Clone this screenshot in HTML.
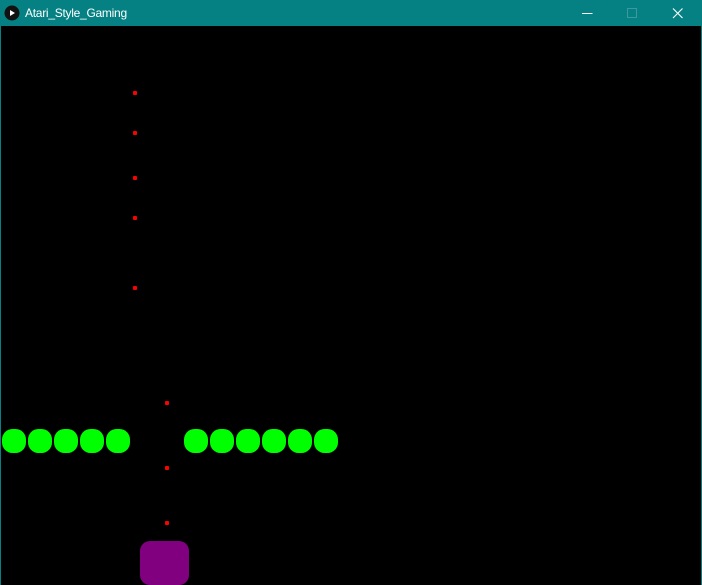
<!DOCTYPE html>
<html>
<head>
<meta charset="utf-8">
<style>
html,body{margin:0;padding:0;width:702px;height:585px;overflow:hidden;background:#000}
#bar{position:absolute;left:0;top:0;width:702px;height:26px;background:#058184}
#title{position:absolute;left:25px;top:5px;font:12px/16px "Liberation Sans",sans-serif;letter-spacing:-.27px;color:#fff;white-space:nowrap}
.edge{position:absolute;top:26px;width:1px;height:559px;background:#058184}
.g{position:absolute;top:429px;width:24px;height:24px;border-radius:10.500px;background:#0f0}
.r{position:absolute;width:4px;height:4px;background:#f00;border-radius:1px}
#p{position:absolute;left:140px;top:541px;width:49px;height:44px;border-radius:10px;background:#800080}
svg{position:absolute;left:0;top:0}
</style>
</head>
<body>
<div id="bar"></div>
<svg width="702" height="26" viewBox="0 0 702 26">
<circle cx="12" cy="13" r="7.500" fill="#111"/>
<path d="M10 10 L15 13 L10 16 Z" fill="#fff"/>
<path d="M582 13.500H592.500" stroke="#fff" stroke-width="1" fill="none"/>
<rect x="627.500" y="8.500" width="9" height="9" stroke="#3a9a9d" stroke-width="1" fill="none"/>
<path d="M673 8.500L682.500 18M682.500 8.500L673 18" stroke="#fff" stroke-width="1.100" fill="none"/>
</svg>
<div id="title">Atari_Style_Gaming</div>
<div class="edge" style="left:0"></div>
<div class="edge" style="left:701px"></div>

<div class="r" style="left:133px;top:91px"></div>
<div class="r" style="left:133px;top:131px"></div>
<div class="r" style="left:133px;top:176px"></div>
<div class="r" style="left:133px;top:216px"></div>
<div class="r" style="left:133px;top:286px"></div>
<div class="r" style="left:165px;top:401px"></div>
<div class="r" style="left:165px;top:466px"></div>
<div class="r" style="left:165px;top:521px"></div>

<div class="g" style="left:2px"></div>
<div class="g" style="left:28px"></div>
<div class="g" style="left:54px"></div>
<div class="g" style="left:80px"></div>
<div class="g" style="left:106px"></div>
<div class="g" style="left:184px"></div>
<div class="g" style="left:210px"></div>
<div class="g" style="left:236px"></div>
<div class="g" style="left:262px"></div>
<div class="g" style="left:288px"></div>
<div class="g" style="left:314px"></div>

<div id="p"></div>
</body>
</html>
